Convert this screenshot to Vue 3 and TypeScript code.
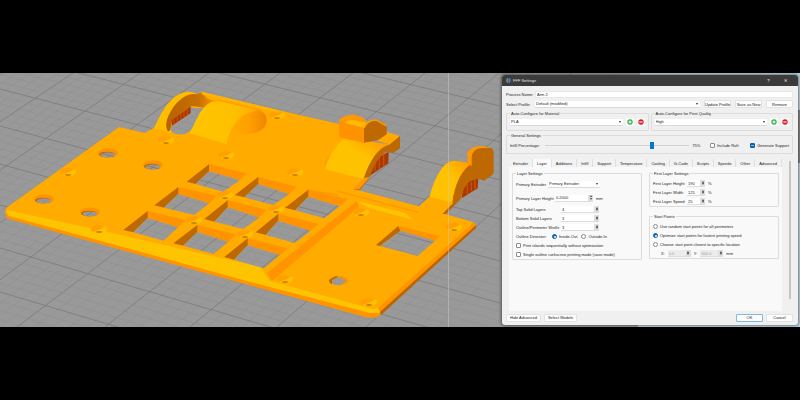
<script setup lang="ts">
import { ref } from 'vue'

interface Line { x1: number; y1: number; x2: number; y2: number; major: boolean }
type Pt = [number, number]

// Build-plate grid: major lines with four minor subdivisions between each pair.
const rising: Pt[] = [
  [-475, -68], [-390, 3], [-307, 73], [-226, 140], [-145, 209], [-64, 280],
  [17, 353], [105, 425], [190, 499], [277, 572], [366, 645], [455, 720],
]
const falling: Pt[] = [
  [-78, 38], [-46, 72], [-14, 106], [19, 142], [53, 180], [89, 219],
  [126, 261], [164, 303], [205, 348], [248, 394], [292, 441], [338, 490],
]

function subdivide(rows: Pt[], make: (p: Pt, major: boolean) => Line): Line[] {
  const out: Line[] = []
  for (let i = 0; i < rows.length - 1; i++) {
    for (let k = 0; k < 5; k++) {
      const t = k / 5
      const a = rows[i][0] + (rows[i + 1][0] - rows[i][0]) * t
      const b = rows[i][1] + (rows[i + 1][1] - rows[i][1]) * t
      out.push(make([a, b], k === 0))
    }
  }
  return out
}

const gridLines: Line[] = [
  ...subdivide(rising, ([a, b], major) => ({ x1: a, y1: 327, x2: b, y2: 73, major })),
  ...subdivide(falling, ([a, b], major) => ({ x1: 0, y1: a, x2: 500, y2: b, major })),
]

// Each window: top-left, top-right, inner right, bottom-right, inner left, bottom-left.
const windows: Pt[][] = [
  [[282, 28], [395, 55], [375, 75], [325, 110], [242, 87], [215, 80]],
  [[430, 66], [545, 95], [522, 117], [475, 150], [388, 127], [360, 120]],
  [[580, 104], [698, 132], [674, 154], [628, 190], [540, 166], [510, 158]],
  [[190, 96], [305, 122], [283, 145], [238, 180], [147, 158], [118, 151]],
  [[338, 136], [455, 165], [433, 187], [385, 222], [298, 200], [268, 192]],
  [[490, 176], [610, 207], [587, 227], [540, 264], [452, 240], [422, 232]],
  [[98, 168], [213, 195], [190, 217], [145, 257], [55, 232], [25, 225]],
  [[247, 210], [363, 238], [340, 260], [295, 297], [205, 272], [175, 265]],
  [[398, 250], [518, 280], [495, 300], [447, 340], [357, 314], [328, 306]],
]
const place = (pts: Pt[]): string => pts.map(([x, y]) => `${115 + x / 3},${155 + y / 3}`).join(' ')
const shaped = windows.map((w) => {
  const inner: Pt = [w[0][0], w[0][1] + 21]
  return {
    top: place([w[0], w[1], w[2], inner]),
    side: place([w[0], inner, w[4], w[5]]),
    hole: place([inner, w[2], w[3], w[4]]),
  }
})

const sinks: Pt[] = [
  [166, 140], [226, 155], [68, 172], [277, 115], [295, 172], [99, 229], [225, 195],
  [194, 220], [245, 234], [276, 209], [361, 212], [454, 227], [285, 279], [369, 302],
]
const bores: Pt[] = [[108, 153], [153, 165], [44, 199], [90, 212]]

const processName = ref('Arm 2')
const infill = ref(75)
const tabs = ['Extruder', 'Layer', 'Additions', 'Infill', 'Support', 'Temperature', 'Cooling', 'G-Code', 'Scripts', 'Speeds', 'Other', 'Advanced']
const active = ref('Layer')
const shells = ref([
  { id: 'top', label: 'Top Solid Layers', value: '4' },
  { id: 'bottom', label: 'Bottom Solid Layers', value: '3' },
  { id: 'outline', label: 'Outline/Perimeter Shells', value: '3' },
])
const firstLayer = ref([
  { id: 'flh', label: 'First Layer Height', value: '190' },
  { id: 'flw', label: 'First Layer Width', value: '125' },
  { id: 'fls', label: 'First Layer Speed', value: '25' },
])
const startPoints = [
  'Use random start points for all perimeters',
  'Optimize start points for fastest printing speed',
  'Choose start point closest to specific location',
]
const start = ref(startPoints[1])
const direction = ref('Inside-Out')
const autoGroups = [
  { id: 'material', title: 'Auto-Configure for Material', value: 'PLA' },
  { id: 'quality', title: 'Auto-Configure for Print Quality', value: 'High' },
]
</script>

<template>
  <main class="screen">
    <div class="scene">
      <svg class="viewport" viewBox="0 73 800 254" preserveAspectRatio="xMidYMid slice" aria-hidden="true">
        <defs>
          <g id="grid">
            <rect x="0" y="73" width="800" height="254" fill="#999999" />
            <line v-for="(l, i) in gridLines" :key="i" :x1="l.x1" :y1="l.y1" :x2="l.x2" :y2="l.y2"
              :stroke="l.major ? '#7a7a7a' : '#8e8e8e'" :stroke-width="l.major ? 0.8 : 0.5" />
          </g>
          <clipPath id="openings">
            <polygon v-for="(w, i) in shaped" :key="i" :points="w.hole" />
            <ellipse v-for="(b, i) in bores" :key="'b' + i" :cx="b[0]" :cy="b[1] + 2" rx="7.5" ry="2.4" />
            <polygon points="400.7,230.7 435,240.7 417.7,256 380,246" />
            <path d="M332 280 L338 277 L346 280.5 L344 283 L339 285.5 L333 284 Z" />
            <path transform="translate(150 85) scale(.3333)" d="M122 85V65Q137 74 162 66C148 82 138 108 126 130C118 146 100 150 85 148C66 145 60 137 62 127L67 122Z" />
          </clipPath>
          <linearGradient id="arch" x1="0" y1="1" x2="1" y2="0">
            <stop offset="0" stop-color="#ffc400" /><stop offset=".6" stop-color="#ffc100" /><stop offset="1" stop-color="#ff9400" />
          </linearGradient>
          <linearGradient id="drum" x1="0" y1="0" x2="1" y2="0">
            <stop offset="0" stop-color="#ffc400" /><stop offset=".6" stop-color="#ffc000" /><stop offset="1" stop-color="#ffa300" />
          </linearGradient>
          <linearGradient id="hollow" x1="0" y1="0" x2="1" y2="0">
            <stop offset="0" stop-color="#ffae00" /><stop offset=".55" stop-color="#ffa000" /><stop offset="1" stop-color="#f08600" />
          </linearGradient>
          <linearGradient id="loop" x1="0" y1="0" x2="1" y2="0">
            <stop offset="0" stop-color="#b86200" /><stop offset=".65" stop-color="#c87000" /><stop offset="1" stop-color="#ff9c00" />
          </linearGradient>
          <g id="sink">
            <ellipse rx="8.3" ry="4.1" fill="#ffc000" />
            <path d="M-8.3 0A8.3 4.1 0 0 1 6 -2.8L2 0L-4 2L-6 2.8Q-8.3 1.5 -8.3 0Z" fill="#ff9f00" />
            <path d="M-3.5 2.8Q0 1.4 3.5 2.8Q2.500 4 0 4Q-2.500 4 -3.5 2.8Z" fill="#cf7f00" />
          </g>
        </defs>

        <use href="#grid" />

        <!-- plate body -->
        <path fill="#ffab00" d="M5 212L6 208L119 127L145 133L155 127L200 92L339 124L372 152L350 188L418 206L445 214L473 222L476.500 226L381 313L376 317H368L7 218Z" />
        <path fill="#ff9400" d="M5 211L8 216L260 283L370 313H380L381 314L377 317.500H367L7 218.500Z" />
        <path fill="#ffc400" d="M7 210L108 232L260 267L270 281L373 309L378 308L380 313H370L260 284.500L8 215.500Z" />
        <path fill="#ff9400" d="M470 226L473 222L476.500 226L381 313L378 308Z" />
        <path fill="#bb6500" d="M476 228L381 315L380 312L476 225Z" />

        <!-- recess beside the key windows -->
        <path fill="#ff9400" d="M356.700 201L359 207L272 281L267 273Z" />
        <path fill="#ffc400" d="M356.700 201L405 213L413 220L369 208Z" />
        <path d="M337 191L419 212.500M307 190L338 195" stroke="#ff9a00" stroke-width="1.300" fill="none" />

        <g v-for="(w, i) in shaped" :key="i">
          <polygon :points="w.top" fill="#ff9400" />
          <polygon :points="w.side" fill="#bd6800" />
        </g>
        <path fill="#bd6800" d="M398.300 226L400.700 230.700L380 246L376 245Z" />
        <path fill="#ff9400" d="M398.300 226L440 236L435 240.700L400.700 230.700Z" />

        <g v-for="(b, i) in bores" :key="'h' + i">
          <ellipse :cx="b[0]" :cy="b[1]" rx="10" ry="4.600" fill="#ff9200" />
          <ellipse :cx="b[0] - 1" :cy="b[1] + 1.500" rx="8" ry="2.800" fill="#bd6800" />
        </g>
        <ellipse cx="338.500" cy="280.500" rx="9.700" ry="4.500" fill="#ff9200" />
        <path fill="#bd6800" d="M329 280L336 276L338 277L332 281V284Q329 283 329 280Z" />
        <use v-for="(s, i) in sinks" :key="'s' + i" href="#sink" :x="s[0]" :y="s[1]" />

        <!-- left loop and drum -->
        <g transform="translate(150 85) scale(.3333)">
          <path fill="#ffbc00" d="M12 130C35 80 60 28 110 20Q135 20 155 35L120 45L60 145L40 137Z" />
          <path fill="url(#loop)" d="M155 22L170 40L200 52L165 68L124 63L65 105L64 124Q60 143 53 138C42 120 52 90 75 60C95 38 115 24 140 28Z" />
          <path fill="#a83a00" d="M64 105L123 64V85L66 123Z" />
          <path d="M72 100V118M82 93V111M92 86V104M102 79V97M112 72V91" stroke="#cf4d0a" stroke-width="3" />
          <path fill="url(#drum)" d="M120 145C136 108 148 68 185 50L210 47L345 80C290 80 240 120 230 178Z" />
          <path fill="url(#hollow)" d="M230 178C240 120 275 82 325 76Q352 82 350 110C347 138 310 150 270 148Q245 150 230 178Z" />
          <path d="M185 49Q200 45 215 48L335 76" stroke="#ff9a00" stroke-width="3" fill="none" />
          <path d="M155 24L385 80" stroke="#ffb400" stroke-width="8" fill="none" />
        </g>

        <!-- middle and right arms -->
        <g transform="translate(300 110) scale(.3333)">
          <path fill="#ffa000" d="M75 180Q65 150 105 125L120 110L100 180Z" />
          <path fill="#a83a00" d="M266 125L265 160L205 200L212 155Z" />
          <path d="M225 150V184M238 140V176M251 133V167" stroke="#cf4d0a" stroke-width="4" />
          <path fill="#ffa900" d="M235 62L258 65L300 78L272 104L230 92Z" />
          <path fill="#bd6800" d="M300 78V115L278 130L262 124C235 138 222 168 210 200L180 240L155 237L188 205C205 150 225 118 268 104Z" />
          <path fill="#ff9800" d="M190 205L210 200L178 238L155 237Z" />
          <path fill="url(#arch)" d="M75 178C85 140 107 108 130 88L190 92L270 103C235 112 210 150 190 208Z" />
          <path fill="#ffab00" d="M75 178L190 208L157 238L60 225Z" />
          <path fill="#ff9800" d="M118 28Q135 14 160 14Q190 18 200 34L192 98L118 82Z" />
          <path fill="#ffb900" d="M132 39Q145 27 160 30L198 38L192 54Z" />
          <path fill="#ff9200" d="M118 40Q122 28 135 30V40L192 53V98L118 80Z" />
          <path fill="#bd6800" d="M192 55Q198 34 225 30Q257 36 260 52V73L235 90L192 98Z" />
          <path d="M192 55Q200 31 228 30L258 47" stroke="#ffa000" stroke-width="4" fill="none" />

          <path fill="#a83a00" d="M535 205L533 235L485 265L492 218Z" />
          <path d="M502 222V252M514 215V244M525 210V238" stroke="#cf4d0a" stroke-width="4" />
          <path fill="#bd6800" d="M510 162L550 175L580 192L552 212L540 207C505 205 492 228 482 268L438 312L425 312L455 278C462 230 480 180 510 162Z" />
          <path fill="url(#arch)" d="M388 264C402 205 430 150 465 152L518 159C486 177 464 220 456 282Z" />
          <path fill="#ffab00" d="M388 260L460 278L425 314L352 294Z" />
          <path fill="#ff9800" d="M502 128Q513 108 545 108L575 114L530 180L503 160Z" />
          <path fill="#bd6800" d="M515 180V140Q518 116 545 114L572 114Q582 118 581 132V190L550 210Z" />
        </g>

        <g clip-path="url(#openings)"><use href="#grid" /></g>
        <path d="M448.500 73V327" stroke="#c9c9c9" stroke-opacity=".5" stroke-width="1" />
        <path fill="#bfd5e2" d="M640 73H800V110H796V163H800V327H638V300H640Z" />
        <path fill="#868686" d="M795 110H800V163H795Z" />
      </svg>

      <section class="dialog" aria-label="FFF Settings">
        <header class="titlebar">
          <svg class="logo" viewBox="0 0 5 5" aria-hidden="true">
            <path d="M0 1h1v3h-1z" fill="#e0484d" /><path d="M1 0h1.500v5h-1.500z" fill="#2fa66a" /><path d="M3 0h1v5h-1z" fill="#268bd0" /><path d="M4 1h1v3h-1z" fill="#754bb0" />
          </svg>
          <h1>FFF Settings</h1>
          <button class="win" type="button" aria-label="Help">?</button>
          <button class="win" type="button" aria-label="Close">✕</button>
        </header>

        <div class="body">
          <div class="row top">
            <label class="lead" for="pname">Process Name:</label>
            <input id="pname" v-model="processName" class="field grow" type="text" />
          </div>
          <div class="row top">
            <label class="lead" for="profile">Select Profile:</label>
            <span class="pick grow"><select id="profile"><option>Default (modified)</option></select></span>
            <button class="btn mid" type="button">Update Profile</button>
            <button class="btn mid" type="button">Save as New</button>
            <button class="btn mid" type="button">Remove</button>
          </div>

          <div class="pair">
            <fieldset v-for="g in autoGroups" :key="g.id" class="group auto">
              <legend>{{ g.title }}</legend>
              <div class="row">
                <span class="pick grow"><select :aria-label="g.title"><option>{{ g.value }}</option></select></span>
                <button class="round" type="button" aria-label="Add">
                  <svg viewBox="0 0 6 6"><circle cx="3" cy="3" r="2.700" fill="#35b34a" /><path d="M3 1.500v3M1.500 3h3" stroke="#fff" /></svg>
                </button>
                <button class="round" type="button" aria-label="Delete">
                  <svg viewBox="0 0 6 6"><circle cx="3" cy="3" r="2.700" fill="#e01b2b" /><path d="M1.300 3h3.400" stroke="#fff" /></svg>
                </button>
              </div>
            </fieldset>
          </div>

          <fieldset class="group general">
            <legend>General Settings</legend>
            <div class="row">
              <label class="wide" for="infill">Infill Percentage:</label>
              <input id="infill" v-model="infill" class="slider grow" type="range" min="0" max="100" />
              <output class="percent">{{ infill }}%</output>
              <label class="tick raft"><input type="checkbox" />Include Raft</label>
              <label class="tick"><input type="checkbox" checked />Generate Support</label>
            </div>
          </fieldset>

          <div class="scroller">
            <div class="book">
              <nav class="tabs" role="tablist">
                <button v-for="t in tabs" :key="t" type="button" role="tab" :aria-selected="t === active"
                  :class="['tab', { on: t === active }]" @click="active = t">{{ t }}</button>
              </nav>
              <div class="pane">
                <fieldset class="group card flush">
                  <legend>Layer Settings</legend>
                  <div class="row tall">
                    <label for="pext">Primary Extruder</label>
                    <span class="pick extruder"><select id="pext"><option>Primary Extruder</option></select></span>
                  </div>
                  <div class="row tall">
                    <label class="c-height" for="plh">Primary Layer Height</label>
                    <span class="spin long"><input id="plh" type="text" value="0.2000" /><i></i></span>
                    <span class="unit">mm</span>
                  </div>
                  <div v-for="s in shells" :key="s.id" class="row">
                    <label class="c-shell" :for="s.id">{{ s.label }}</label>
                    <span class="spin long"><input :id="s.id" v-model="s.value" type="text" /><i></i></span>
                  </div>
                  <div class="row">
                    <span class="c-dir">Outline Direction:</span>
                    <label class="tick"><input v-model="direction" type="radio" name="dir" value="Inside-Out" />Inside-Out</label>
                    <label class="tick next"><input v-model="direction" type="radio" name="dir" value="Outside-In" />Outside-In</label>
                  </div>
                  <div class="row"><label class="tick"><input type="checkbox" />Print islands sequentially without optimization</label></div>
                  <div class="row"><label class="tick"><input type="checkbox" />Single outline corkscrew printing mode (vase mode)</label></div>
                </fieldset>

                <div class="column">
                  <fieldset class="group card">
                    <legend>First Layer Settings</legend>
                    <div v-for="f in firstLayer" :key="f.id" class="row">
                      <label class="c-first" :for="f.id">{{ f.label }}</label>
                      <span class="spin"><input :id="f.id" v-model="f.value" type="text" /><i></i></span>
                      <span class="unit">%</span>
                    </div>
                  </fieldset>
                  <fieldset class="group card">
                    <legend>Start Points</legend>
                    <div v-for="p in startPoints" :key="p" class="row">
                      <label class="tick"><input v-model="start" type="radio" name="start" :value="p" />{{ p }}</label>
                    </div>
                    <div class="row spot">
                      <label for="sx">X:</label>
                      <span class="spin off"><input id="sx" type="text" value="0.0" disabled /><i></i></span>
                      <label for="sy">Y:</label>
                      <span class="spin off"><input id="sy" type="text" value="500.0" disabled /><i></i></span>
                      <span>mm</span>
                    </div>
                  </fieldset>
                </div>
              </div>
            </div>
            <div class="bar"></div>
          </div>

          <footer class="row foot">
            <button class="btn" type="button">Hide Advanced</button>
            <button class="btn" type="button">Select Models</button>
            <span class="grow"></span>
            <button class="btn mid ok" type="button">OK</button>
            <button class="btn mid" type="button">Cancel</button>
          </footer>
        </div>
      </section>
    </div>
  </main>
</template>

<style>
body { margin: 0; background: #000; }
</style>

<style scoped>
* { box-sizing: border-box; }
.screen { min-height: 100vh; display: flex; align-items: center; background: #000; }
.scene { position: relative; width: 100%; min-height: 254px; display: flex; justify-content: flex-end; align-items: flex-start; padding: 2px 2px 1px; overflow: hidden; background: #999; }
.viewport { position: absolute; inset: 0; width: 100%; height: 100%; }
.dialog { position: relative; width: 37%; min-width: 296px; background: #f0f0f0; border-radius: 3px; overflow: hidden; box-shadow: 0 0 3px 1px rgba(0, 0, 0, .45); font: 4px/5px "Liberation Sans", sans-serif; color: #1c1c1c; }
button, input, select { font: inherit; color: inherit; margin: 0; }
label, span, legend, button { white-space: nowrap; }
.titlebar { display: flex; align-items: center; height: 11px; padding: 0 4px; background: #3b3b3b; color: #e4e4e4; }
.logo { width: 5px; height: 5px; margin-right: 2px; }
h1 { flex: 1; margin: 0; font: inherit; }
.win { width: 17px; padding: 0; border: 0; background: none; font-weight: bold; text-align: center; }
.body { padding: 3px 5px 1px 4px; }
.row { display: flex; align-items: center; height: 9px; }
.top { height: 10px; gap: 4px; }
.grow { flex: 1; min-width: 0; }
.lead { width: 25px; }
.field { height: 7px; padding: 0 1px; border: 1px solid #e8e8e8; background: #fff; }
.pick { display: grid; align-items: center; height: 7px; background: #fff; border-bottom: 1px solid #dadada; }
.pick::after { content: ""; grid-area: 1 / 1; justify-self: end; margin-right: 2px; border: 1px solid transparent; border-top: 2px solid #333; border-bottom: 0; pointer-events: none; }
.pick select { grid-area: 1 / 1; appearance: none; width: 100%; height: 6px; padding: 0 1px; border: 0; background: none; }
.btn { height: 8px; padding: 0 3px; border: 1px solid #e2e2e2; border-radius: 1px; background: #fdfdfd; line-height: 5px; }
.mid { width: 27px; padding: 0; text-align: center; }
.ok { border-color: #7db9dd; }
.group { min-width: 0; margin: 0; padding: 0 3px 2px; border: 1px solid #dcdcdc; border-radius: 1px; }
.group legend { padding: 0 1px; height: 5px; }
.pair { display: grid; grid-template-columns: 1fr 1fr; gap: 2px; margin-top: 2px; }
.auto .row { gap: 3px; height: 12px; }
.round { width: 8px; height: 8px; padding: 1px; border: 0; background: #fafafa; }
.round svg { display: block; width: 6px; height: 6px; }
.general { margin-top: 2px; padding-bottom: 1px; }
.general .row { height: 14px; }
.wide { width: 35px; }
.slider { appearance: none; height: 7px; background: linear-gradient(#d2d2d2, #d2d2d2) center / 100% 1px no-repeat; }
.slider::-webkit-slider-thumb { appearance: none; width: 4px; height: 7px; background: #0078d4; }
.percent { width: 21px; padding-left: 3px; }
.tick { display: flex; align-items: center; gap: 2px; }
.tick input { appearance: none; flex: none; display: grid; place-items: center; width: 5px; height: 5px; border: 1px solid #8c8c8c; border-radius: 1px; background: #fff; }
.tick input[type="radio"] { border-radius: 50%; }
.tick input:checked { border-color: #0a64ad; background: #0a64ad; }
.tick input[type="radio"]:checked::after { content: ""; width: 2px; height: 2px; border-radius: 50%; background: #fff; }
.tick input[type="checkbox"]:checked::after { content: ""; width: 3px; height: 1px; background: #8fbbe0; }
.raft { width: 40px; }
.scroller { display: flex; gap: 7px; margin-top: 5px; padding: 0 2px 0 3px; }
.book { flex: 1; min-width: 0; display: flex; flex-direction: column; }
.tabs { display: flex; justify-content: space-between; background: #f0f0f0; }
.tab { flex: auto; height: 8px; padding: 0; border: 0; border-right: 1px solid #dfdfdf; background: #f2f2f2; line-height: 5px; }
.tab.on { background: #fafafa; }
.pane { display: grid; grid-template-columns: 1fr 1fr; align-items: start; gap: 7px; min-height: 144px; padding: 4px 3px; background: #f9f9f9; }
.column { display: grid; gap: 7px; }
.card { padding: 3px 3px 0; background: none; }
.flush { padding-top: 1px; }
.tall { height: 14px; }
.extruder { width: 52px; margin-left: 2px; }
.c-height { width: 39px; }
.c-shell { width: 45px; }
.c-dir { width: 36px; }
.c-first { width: 34px; }
.next { margin-left: 4px; }
.unit { margin-left: 3px; }
.spin { display: flex; width: 18px; height: 7px; background: #fff; border-bottom: 1px solid #ddd; }
.spin.long { width: 38px; }
.spin input { flex: 1; min-width: 0; width: 0; padding: 0 1px; border: 0; background: none; }
.spin i { display: grid; align-content: space-evenly; justify-items: center; width: 5px; background: #dedede; }
.spin i::before { content: ""; border: 1px solid transparent; border-bottom: 2px solid #444; border-top: 0; }
.spin i::after { content: ""; border: 1px solid transparent; border-top: 2px solid #444; border-bottom: 0; }
.spot { gap: 3px; padding-left: 8px; }
.spin.off { width: 23px; background: #ececec; color: #999; }
.bar { width: 2px; height: 138px; margin-top: 2px; background: #c6c6c6; }
.foot { height: 13px; gap: 3px; }
</style>
